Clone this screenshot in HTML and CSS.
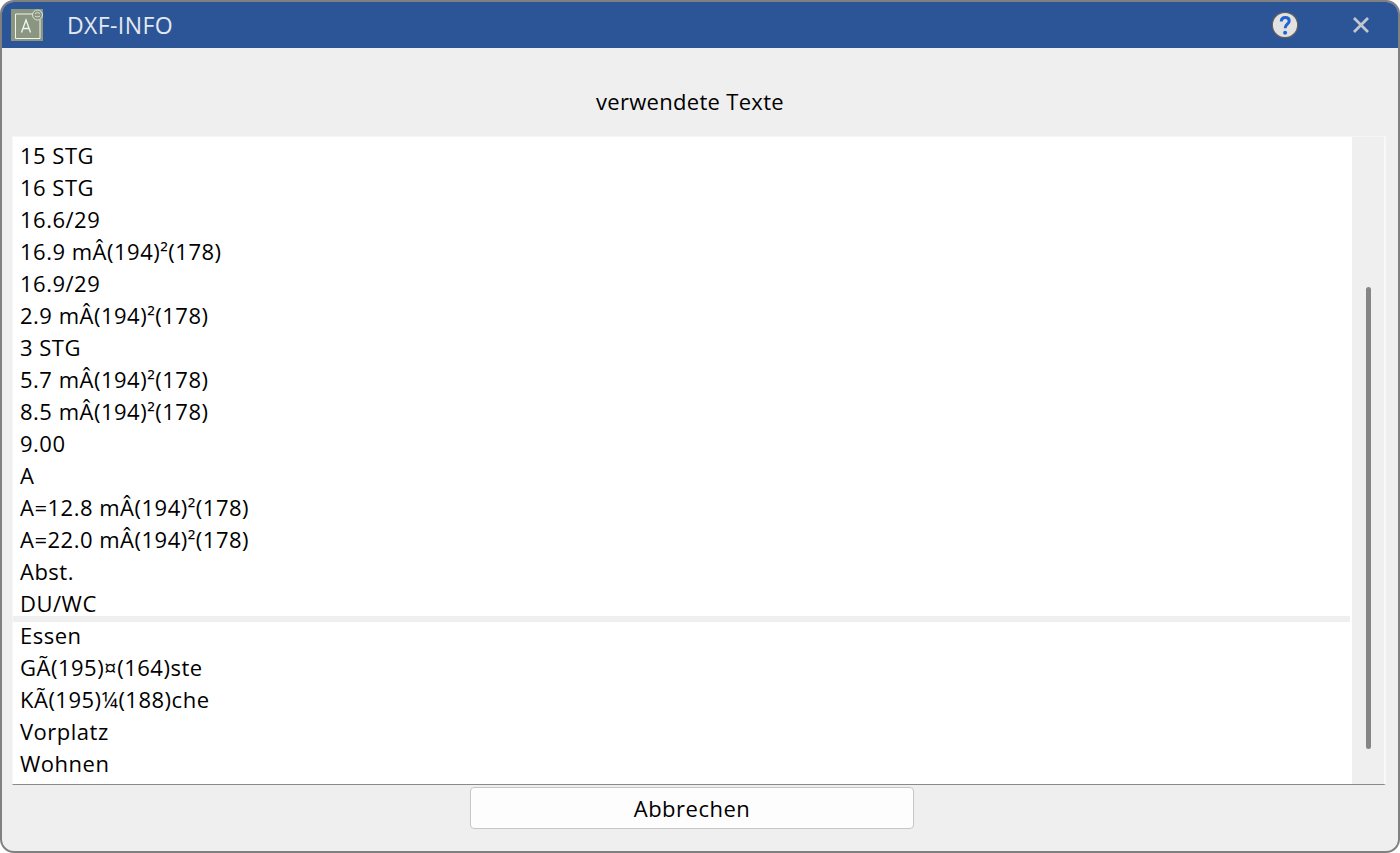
FILE: index.html
```html
<!DOCTYPE html>
<html lang="de">
<head>
<meta charset="utf-8">
<title>DXF-INFO</title>
<link rel="stylesheet" href="styles.css">
</head>
<body>
<div class="window">
  <header class="titlebar">
    <svg class="app-icon" width="32" height="32" viewBox="0 0 32 32">
      <rect width="32" height="32" fill="#8a9680"/>
      <path d="M22 5H4.500V29.500H29V11" fill="none" stroke="#f1f3ee" stroke-width="1"/>
      <circle cx="26.500" cy="6" r="5" fill="#8a9680" stroke="#dfe3da" stroke-width="1"/>
      <path d="M24 4.500c1.500-1 3.500-1 5 0M24 7c1.500 1 3.500 1 5 0" fill="none" stroke="#dfe3da" stroke-width="1"/>
      <path d="M10.500 23.500L15 11L19.500 23.500M12 19.500H18" fill="none" stroke="#f4f5f2" stroke-width="1.300"/>
    </svg>
    <span class="title">DXF-INFO</span>
    <svg class="help" width="28" height="28" viewBox="0 0 28 28">
      <circle cx="14" cy="14" r="12.700" fill="#e2e2e2" stroke="#5f5f5f" stroke-width="1.200"/>
      <path d="M10.300 10.500c0-2.700 1.700-4 4-4 2.400 0 3.900 1.400 3.900 3.400 0 3.300-4.100 3.300-4.100 7.300" fill="none" stroke="#2264cf" stroke-width="3"/>
      <circle cx="14.100" cy="21.800" r="2" fill="#2264cf"/>
    </svg>
    <svg class="close" width="16" height="16" viewBox="0 0 16 16">
      <path d="M1 1L15 15M15 1L1 15" stroke="#c3c7cf" stroke-width="2.800" fill="none"/>
    </svg>
  </header>
  <main class="content">
    <h1 class="heading">verwendete Texte</h1>
    <div class="listbox">
      <ul class="list">
        <li>15 STG</li>
        <li>16 STG</li>
        <li>16.6/29</li>
        <li>16.9 mÂ(194)²(178)</li>
        <li>16.9/29</li>
        <li>2.9 mÂ(194)²(178)</li>
        <li>3 STG</li>
        <li>5.7 mÂ(194)²(178)</li>
        <li>8.5 mÂ(194)²(178)</li>
        <li>9.00</li>
        <li>A</li>
        <li>A=12.8 mÂ(194)²(178)</li>
        <li>A=22.0 mÂ(194)²(178)</li>
        <li>Abst.</li>
        <li>DU/WC</li>
        <li>Essen</li>
        <li>GÃ(195)¤(164)ste</li>
        <li>KÃ(195)¼(188)che</li>
        <li>Vorplatz</li>
        <li>Wohnen</li>
      </ul>
      <div class="divider"></div>
      <div class="scrolltrack"><div class="thumb"></div></div>
    </div>
    <div class="actions"><button class="btn" type="button">Abbrechen</button></div>
  </main>
</div>
</body>
</html>
```
FILE: styles.css
```css
* { box-sizing: border-box; }
html, body { margin: 0; height: 100%; background: #fff; }
body { font-family: "Open Sans", "Noto Sans", sans-serif; color: #000; }
.window {
  width: 1400px;
  height: 853px;
  border: 2px solid #808080;
  border-radius: 14px;
  overflow: hidden;
  display: flex;
  flex-direction: column;
  background: #efefef;
}
.titlebar {
  height: 46px;
  flex: none;
  background: #2b5597;
  display: flex;
  align-items: center;
  padding-left: 9px;
}
.app-icon { flex: none; }
.title {
  margin-left: 24px;
  font-size: 23px;
  letter-spacing: 0.4px;
  color: #e4e8f0;
  margin-top: -1px;
}
.help { margin-left: auto; }
.close { margin-left: 54px; margin-right: 29px; }
.content {
  flex: 1;
  display: flex;
  flex-direction: column;
  padding: 0 12px 0 10px;
}
.heading {
  margin: 0;
  height: 88px;
  padding: 39px 18px 0 0;
  font-size: 22px;
  letter-spacing: 0.3px;
  font-weight: 400;
  line-height: 28px;
  text-align: center;
}
.listbox {
  position: relative;
  height: 649px;
  display: flex;
  background: #fff;
  border: 1px solid #f6f6f6;
  border-bottom: 1px solid #8a8a8a;
  border-right: 2px solid #f8f8f8;
}
.list {
  list-style: none;
  margin: 0;
  padding: 2px 0 0 7px;
  flex: 1;
  font-size: 22px;
  letter-spacing: 0.5px;
  line-height: 32px;
}
.divider {
  position: absolute;
  left: 0;
  top: 479px;
  width: 1337px;
  height: 6px;
  background: #efefef;
}
.scrolltrack {
  width: 32px;
  flex: none;
  background: #efefef;
  padding: 150px 0 0 14px;
}
.thumb {
  width: 5px;
  height: 462px;
  border-radius: 3px;
  background: #858585;
}
.actions {
  display: flex;
  justify-content: center;
  padding: 2px 14px 0 0;
}
.btn {
  width: 444px;
  height: 42px;
  background: #fdfdfd;
  border: 1px solid #c6c6c6;
  border-radius: 4px;
  font: inherit;
  font-size: 22px;
  letter-spacing: 0.5px;
  color: #000;
  padding: 0;
}
```
